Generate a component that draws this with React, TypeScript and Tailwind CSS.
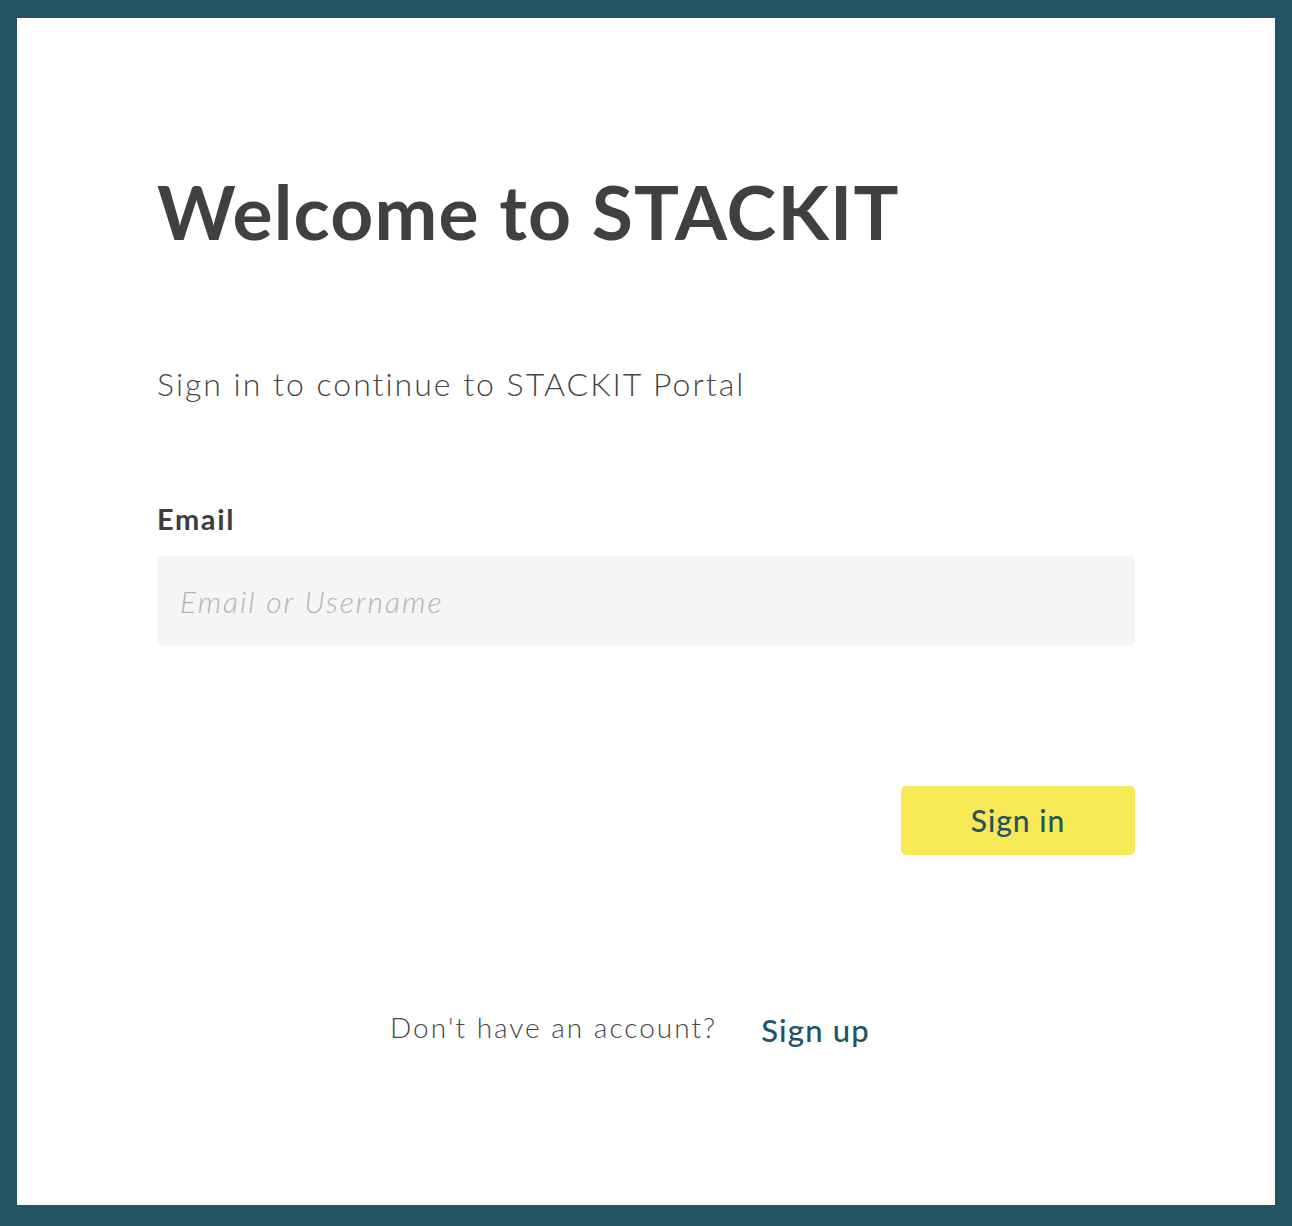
import React, { useState } from "react";

export default function App() {
  const [email, setEmail] = useState("");

  const handleSubmit = (e: React.FormEvent) => {
    e.preventDefault();
  };

  return (
    <div className="w-[1292px] h-[1226px] bg-[#225462] pt-[18px] px-[17px] pb-[21px] font-['Lato','Noto_Sans',sans-serif]">
      <div className="h-full bg-white px-[140px] pt-[156px]">
        {/* Heading */}
        <h1 className="text-[75px] leading-none font-bold text-[#404040] tracking-[1.2px]">
          Welcome to STACKIT
        </h1>

        <p className="mt-[119px] text-[32px] leading-none font-light text-[#464646] tracking-[2px]">
          Sign in to continue to STACKIT Portal
        </p>

        {/* Form */}
        <form onSubmit={handleSubmit} className="mt-[104px] flex flex-col">
          <label htmlFor="email" className="text-[29px] leading-none font-bold text-[#3d3d3d] tracking-[1.6px]">
            Email
          </label>
          <input
            id="email"
            type="text"
            value={email}
            onChange={(e) => setEmail(e.target.value)}
            placeholder="Email or Username"
            className="mt-[23px] h-[89px] w-full rounded-[5px] bg-[#f5f5f5] pl-[23px] text-[30px] font-light italic tracking-[2px] text-[#404040] placeholder:text-[#b3b3b3] focus:outline-none"
          />
          <div className="mt-[141px] flex justify-end">
            <button
              type="submit"
              className="h-[69px] w-[234px] rounded-[5px] bg-[#f7e955] text-[30px] font-medium tracking-[1px] text-[#235461]"
            >
              Sign in
            </button>
          </div>
        </form>

        {/* Footer */}
        <div className="mt-[158px] flex items-start pl-[233px]">
          <span className="text-[28px] leading-none font-light text-[#464646] tracking-[2px]">
            Don't have an account?
          </span>
          <a href="#" className="ml-[44px] pt-[2px] text-[31px] leading-none font-medium text-[#225462] tracking-[1.2px]">
            Sign up
          </a>
        </div>
      </div>
    </div>
  );
}
